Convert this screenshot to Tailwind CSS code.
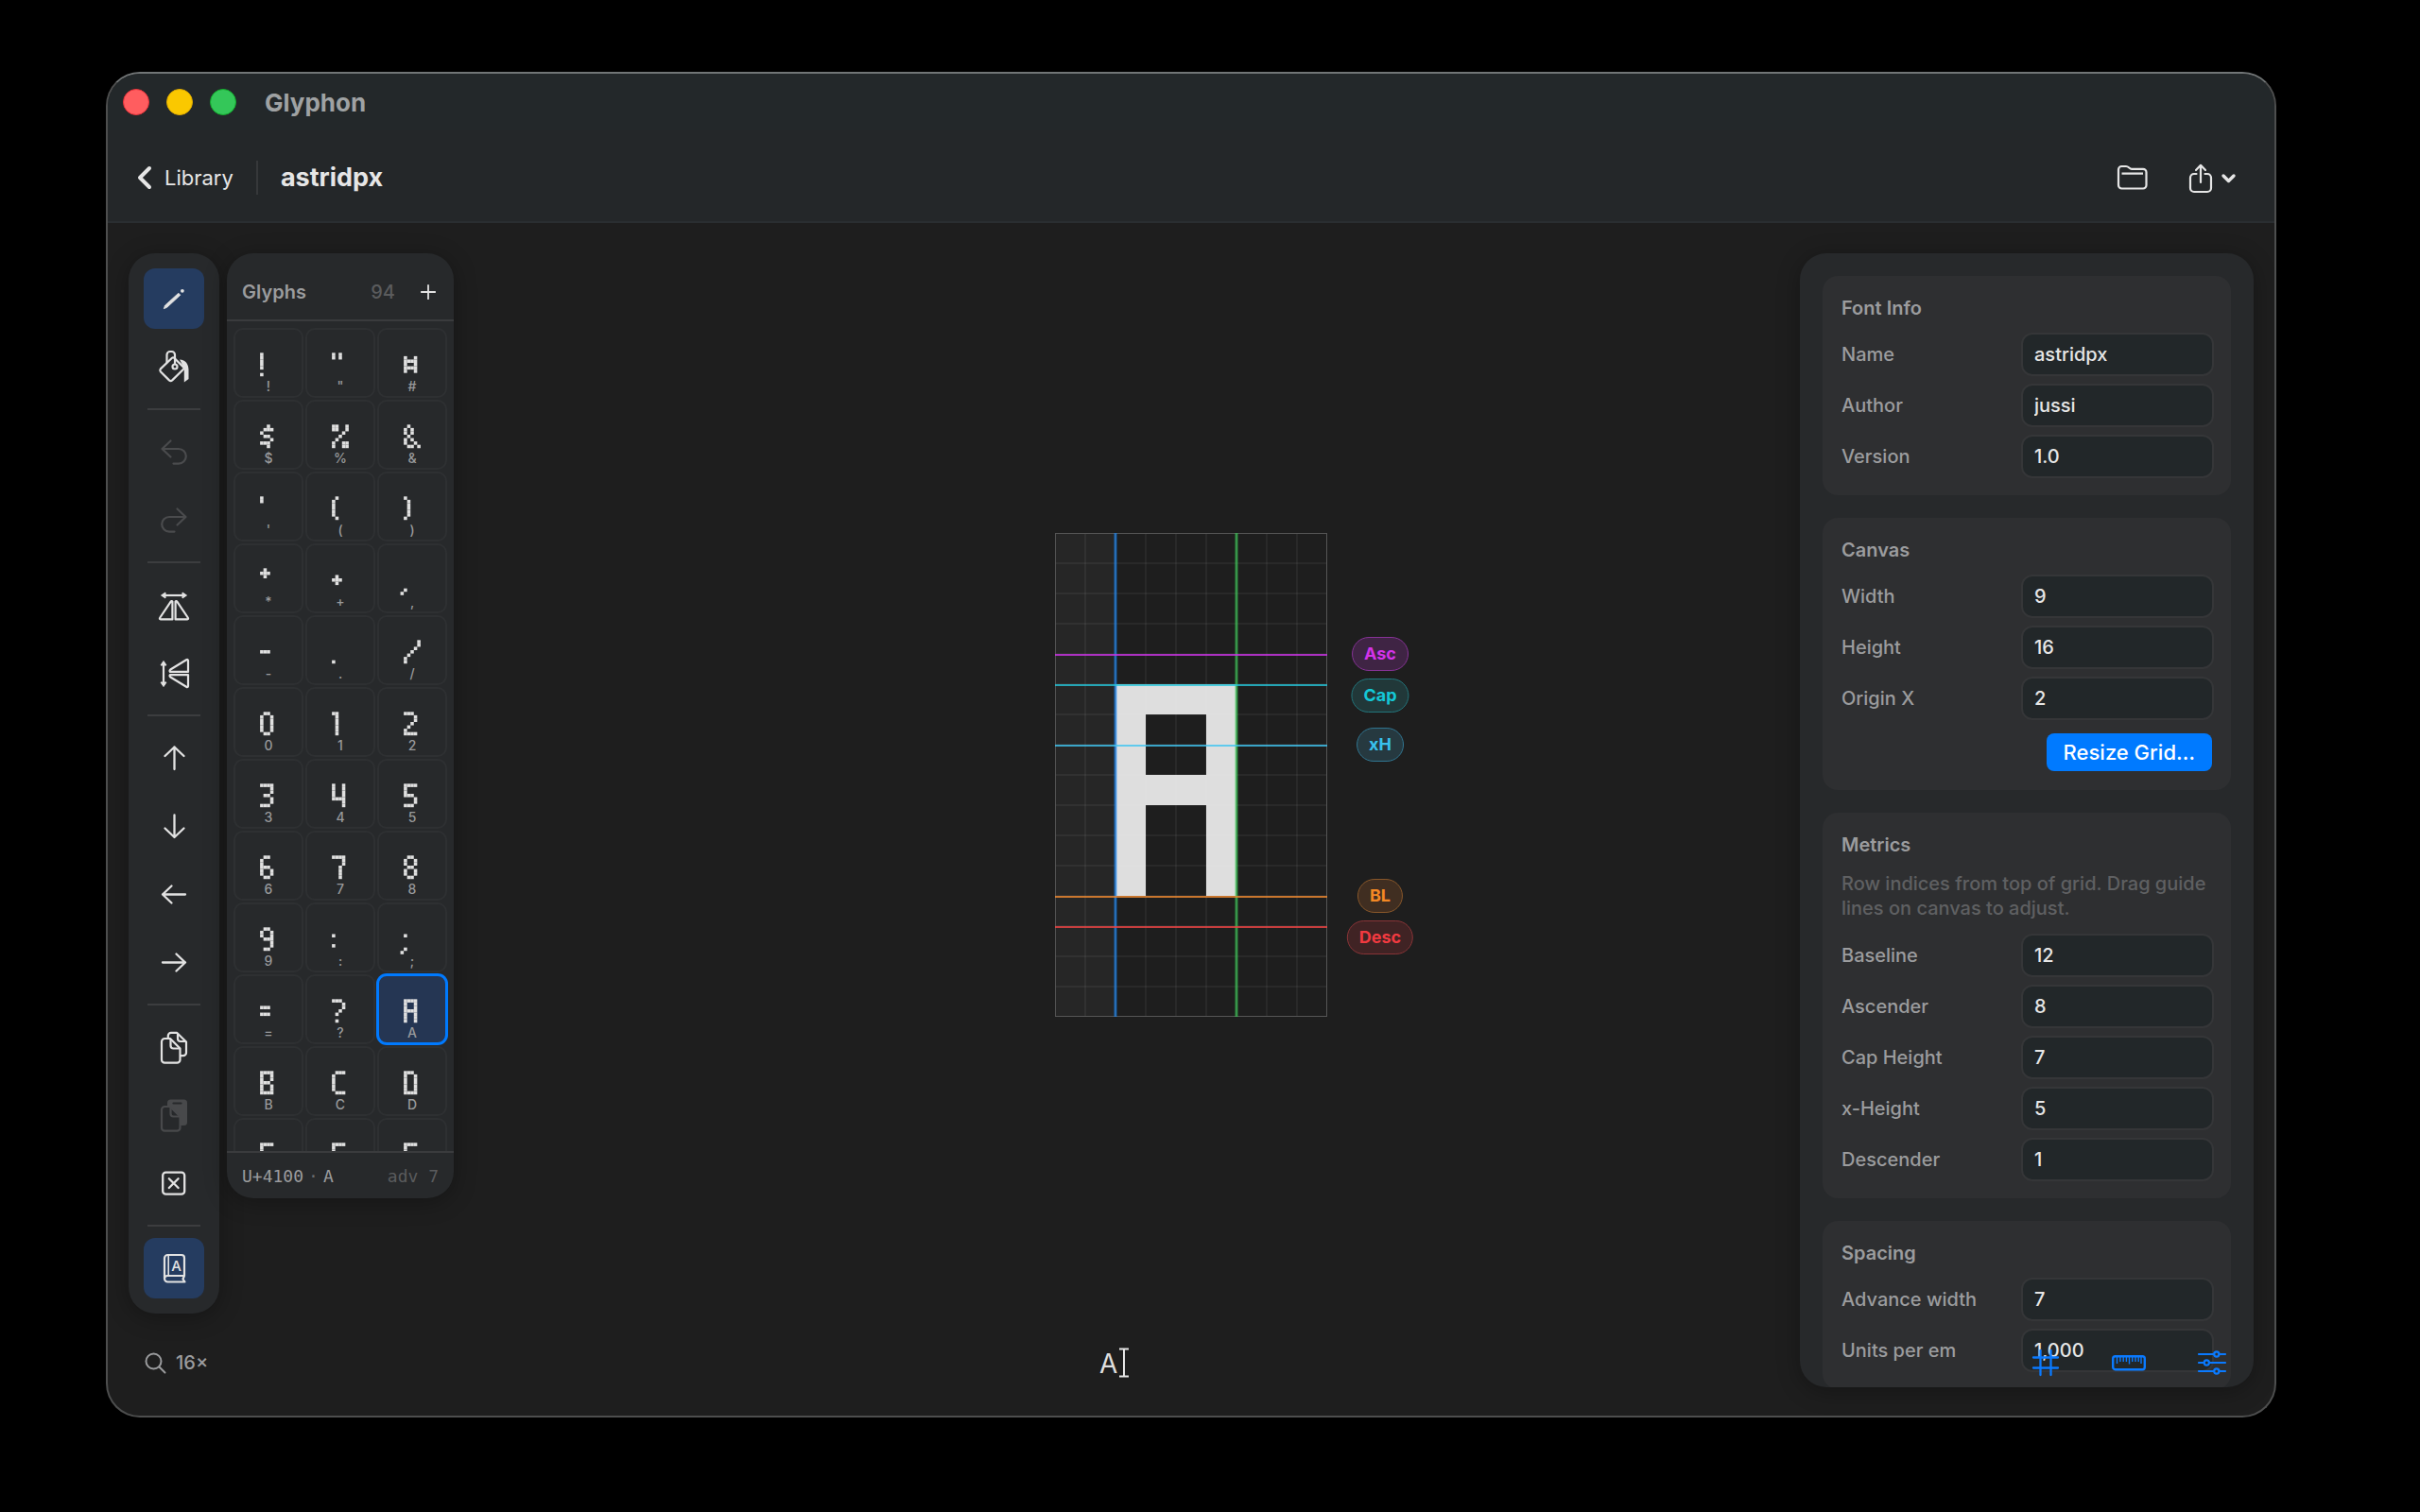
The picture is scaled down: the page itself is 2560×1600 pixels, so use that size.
<!DOCTYPE html>
<html lang="en">
<head>
  <meta charset="UTF-8" />
  <meta name="viewport" content="width=device-width, initial-scale=1.0"/>
  <title>Glyphon</title>
  <script src="https://cdn.jsdelivr.net/npm/@tailwindcss/browser@4"></script>
</head>
<body class="bg-black h-screen flex pt-[76px] pr-[152px] pb-[100px] pl-28 font-['Inter','Liberation_Sans',sans-serif] text-[20px] leading-6 text-[#9b9c9e]">

  <div class="flex-1 min-w-0 flex flex-col overflow-hidden rounded-[36px] border-2 border-[#4d4e4e] border-t-[#717576] bg-[#1e1e1e]">

    <!-- Title bar -->
    <header class="h-[60px] shrink-0 flex items-center gap-[18px] pl-4 bg-[#23282a]">
      <button aria-label="Close" class="size-7 rounded-full bg-[#ff5d5f] border border-[#e8323a]"></button>
      <button aria-label="Minimize" class="size-7 rounded-full bg-[#fac800] border border-[#e0ac00]"></button>
      <button aria-label="Zoom" class="size-7 rounded-full bg-[#34c759] border border-[#12ab2c]"></button>
      <h1 class="ml-3 pt-0.5 text-[26px] leading-8 font-bold text-[#9fa2a3]">Glyphon</h1>
    </header>

    <!-- Toolbar -->
    <div class="h-[98px] shrink-0 flex items-center pt-1 pl-7 pr-[38px] border-b-2 border-[#2a2e31] bg-[#242729] text-[#e6e6e6]">
      <a href="#" class="flex items-center gap-2 text-[22px]">
        <svg class="w-6 h-8" viewBox="0 0 24 32" fill="none" stroke="currentColor" stroke-width="4" stroke-linecap="round" stroke-linejoin="round"><path d="M16 6 6 16l10 10"/></svg>
        Library
      </a>
      <div class="w-0.5 h-9 mx-6 bg-[#36383a]"></div>
      <h2 class="text-[27px] leading-8 font-bold">astridpx</h2>
      <div class="ml-auto flex items-center gap-[38px]">
        <button aria-label="Open folder">
          <svg class="w-9 h-9" viewBox="0 0 36 36" fill="none" stroke="currentColor" stroke-width="2.200" stroke-linejoin="round"><path d="M3 26V9.500a3.500 3.500 0 0 1 3.500-3.500h4.500c3 0 3.500 2.800 6 2.800H29a3.500 3.500 0 0 1 3.500 3.500V26a3.500 3.500 0 0 1-3.500 3.500H6.500A3.500 3.500 0 0 1 3 26Z"/><path d="M6.500 13.700h22.500"/></svg>
        </button>
        <button aria-label="Share" class="flex items-center gap-1">
          <svg class="w-8 h-9" viewBox="0 0 32 36" fill="none" stroke="currentColor" stroke-width="2.200" stroke-linecap="round" stroke-linejoin="round"><path d="M11.500 14H9a4 4 0 0 0-4 4v11a4 4 0 0 0 4 4h14a4 4 0 0 0 4-4V18a4 4 0 0 0-4-4h-2.500"/><path d="M16 23V5M11 10l5-5.200 5 5.200"/></svg>
          <svg class="w-5 h-9" viewBox="0 0 20 36" fill="none" stroke="currentColor" stroke-width="3.400" stroke-linecap="round" stroke-linejoin="round"><path d="m4 16 5.500 5.500L15 16"/></svg>
        </button>
      </div>
    </div>

    <main class="flex-1 min-h-0 grid grid-cols-1 grid-rows-1">

      <!-- Drawing canvas -->
      <section class="col-start-1 row-start-1 flex items-center justify-center pb-[94px]">
        <div class="relative w-72 h-[512px]">
          <svg id="canvas" class="w-72 h-[512px] overflow-visible" viewBox="0 0 288 512">
            <rect width="288" height="512" fill="#1e1e1e"/>
            <rect width="64" height="512" fill="#262626"/>
            <g id="pixels" fill="#dedede"></g>
            <g id="gridLines" stroke="#ffffff" stroke-opacity="0.05" stroke-width="2"></g>
            <rect x="0.500" y="0.500" width="287" height="511" fill="none" stroke="#555555"/>
            <path d="M64 0V512" stroke="#0a84ff" stroke-opacity="0.3" stroke-width="4"/>
            <path d="M64 0V512" stroke="#2a7fd6" stroke-opacity="0.7" stroke-width="2"/>
            <path d="M192 0V512" stroke="#32d74b" stroke-opacity="0.3" stroke-width="4"/>
            <path d="M192 0V512" stroke="#3fae55" stroke-opacity="0.7" stroke-width="2"/>
            <path d="M0 129H288" stroke="#cc33e6" stroke-opacity="0.8" stroke-width="2"/>
            <path d="M0 161H288" stroke="#26c6da" stroke-opacity="0.8" stroke-width="2"/>
            <path d="M0 225H288" stroke="#40c4f0" stroke-opacity="0.8" stroke-width="2"/>
            <path d="M0 385H288" stroke="#f08a30" stroke-opacity="0.8" stroke-width="2"/>
            <path d="M0 417H288" stroke="#f04545" stroke-opacity="0.8" stroke-width="2"/>
          </svg>
          <!-- Guide labels -->
          <div class="absolute left-[344px] top-[128px] -translate-1/2 h-9 px-3 flex items-center rounded-full border border-[#863296] bg-[#3f2444] text-[18px] font-bold text-[#d433ea]">Asc</div>
          <div class="absolute left-[344px] top-[172px] -translate-1/2 h-9 px-3 flex items-center rounded-full border border-[#22757b] bg-[#213839] text-[18px] font-bold text-[#14c8d6]">Cap</div>
          <div class="absolute left-[344px] top-[224px] -translate-1/2 h-9 px-3 flex items-center rounded-full border border-[#307590] bg-[#263940] text-[18px] font-bold text-[#38c1ee]">xH</div>
          <div class="absolute left-[344px] top-[384px] -translate-1/2 h-9 px-3 flex items-center rounded-full border border-[#88572a] bg-[#402e21] text-[18px] font-bold text-[#f48824]">BL</div>
          <div class="absolute left-[344px] top-[428px] -translate-1/2 h-9 px-3 flex items-center rounded-full border border-[#883437] bg-[#402324] text-[18px] font-bold text-[#f23a40]">Desc</div>
        </div>
      </section>

      <!-- Floating panels -->
      <div class="col-start-1 row-start-1 min-h-0 flex items-start justify-between pt-8 px-[22px] pb-[30px]">
        <div class="flex items-start gap-2 max-h-full">

          <!-- Tools -->
          <nav class="w-24 p-4 flex flex-col items-center gap-2 rounded-[28px] bg-[#27292b] text-[#e2e2e2] shadow-[0_4px_24px_rgba(0,0,0,0.3)]">
            <button aria-label="Pencil" class="size-16 grid place-items-center rounded-xl bg-[#253c60]">
              <svg class="size-8" viewBox="0 0 32 32" fill="currentColor"><path d="M5.300 26.700 6.500 23.200 20.800 10.200l2 2L8.700 25.300Z" stroke="currentColor" stroke-width="0.800" stroke-linejoin="round"/><circle cx="24.900" cy="7.800" r="1.900"/></svg>
            </button>
            <button aria-label="Fill" class="size-16 grid place-items-center rounded-xl">
              <svg class="size-9" viewBox="0 0 36 36" fill="none" stroke="currentColor" stroke-width="2.200" stroke-linecap="round" stroke-linejoin="round"><path d="M18.200 8.800 28 18.400q1 1.200 0 2.300L16.200 32.400q-1.600 1.300-3.200 0L3.800 23.200q-1-1.500 0-2.800L16 8.800q1.100-1 2.200 0Z"/><path d="M10.500 13.500V5.500a3.500 3.500 0 0 1 3.500-3.500h1.500a3.500 3.500 0 0 1 3.500 3.500v10"/><circle cx="19" cy="18" r="2.500"/><path d="M24 10.500c6.500 0 9.500 5 9.500 11V31l-4.700 3.500V19.500Z" fill="currentColor" stroke="none"/></svg>
            </button>
            <div class="w-14 h-0.5 my-1 bg-[#3c3d3f]"></div>
            <button aria-label="Undo" class="size-16 grid place-items-center rounded-xl text-[#4a4b4d]">
              <svg class="size-8" viewBox="0 0 32 32" fill="none" stroke="currentColor" stroke-width="2.200" stroke-linecap="round" stroke-linejoin="round"><path d="M12.500 4.500 3.500 13l9 8.500M4 13h17a7.800 7.800 0 0 1 0 15.600h-5.500"/></svg>
            </button>
            <button aria-label="Redo" class="size-16 grid place-items-center rounded-xl text-[#4a4b4d]">
              <svg class="size-8" viewBox="0 0 32 32" fill="none" stroke="currentColor" stroke-width="2.200" stroke-linecap="round" stroke-linejoin="round"><path d="m19.500 4.500 9 8.500-9 8.500M28 13H11a7.800 7.800 0 0 0 0 15.600h5.500"/></svg>
            </button>
            <div class="w-14 h-0.5 my-1 bg-[#3c3d3f]"></div>
            <button aria-label="Flip horizontally" class="size-16 grid place-items-center rounded-xl">
              <svg class="size-9" viewBox="0 0 36 36" fill="none" stroke="currentColor" stroke-width="2.200" stroke-linejoin="round"><path d="M7 8h22"/><path d="M4.500 8 9 5v6ZM31.500 8 27 5v6Z" fill="currentColor" stroke-width="1"/><path d="M16.400 14.500V33.400H4q-1.700-.300-.700-1.900L14.500 14.800q1.300-1.300 1.900-.300ZM19.600 14.500V33.400H32q1.700-.300.700-1.900L21.500 14.800q-1.300-1.300-1.900-.300Z"/></svg>
            </button>
            <button aria-label="Flip vertically" class="size-16 grid place-items-center rounded-xl">
              <svg class="size-9" viewBox="0 0 36 36" fill="none" stroke="currentColor" stroke-width="2.200" stroke-linejoin="round"><path d="M7 8v22"/><path d="M7 5.500 4 10h6ZM7 32.500 4 28h6Z" fill="currentColor" stroke-width="1"/><path d="M14 16.900H33V5q-.300-1.700-1.900-.700L14.300 14.500q-1.300 1.300-.300 2.400ZM14 20.100H33V32q-.300 1.700-1.900.700L14.300 22.500q-1.300-1.300-.300-2.400Z"/></svg>
            </button>
            <div class="w-14 h-0.5 my-1 bg-[#3c3d3f]"></div>
            <button aria-label="Shift up" class="size-16 grid place-items-center rounded-xl">
              <svg class="size-8" viewBox="0 0 32 32" fill="none" stroke="currentColor" stroke-width="2.300" stroke-linecap="round" stroke-linejoin="round"><path d="M16.500 28V4.500M6.500 14l10-9.500 10 9.500"/></svg>
            </button>
            <button aria-label="Shift down" class="size-16 grid place-items-center rounded-xl">
              <svg class="size-8" viewBox="0 0 32 32" fill="none" stroke="currentColor" stroke-width="2.300" stroke-linecap="round" stroke-linejoin="round"><path d="M16.500 4.500V28M6.500 18.500l10 9.500 10-9.500"/></svg>
            </button>
            <button aria-label="Shift left" class="size-16 grid place-items-center rounded-xl">
              <svg class="size-8" viewBox="0 0 32 32" fill="none" stroke="currentColor" stroke-width="2.300" stroke-linecap="round" stroke-linejoin="round"><path d="M28 16.500H4M13.500 7.500 4 16.500l9.500 9"/></svg>
            </button>
            <button aria-label="Shift right" class="size-16 grid place-items-center rounded-xl">
              <svg class="size-8" viewBox="0 0 32 32" fill="none" stroke="currentColor" stroke-width="2.300" stroke-linecap="round" stroke-linejoin="round"><path d="M4 16.500h24M18.500 7.500l9.500 9-9.500 9"/></svg>
            </button>
            <div class="w-14 h-0.5 my-1 bg-[#3c3d3f]"></div>
            <button aria-label="Copy" class="size-16 grid place-items-center rounded-xl">
              <svg class="size-9" viewBox="0 0 36 36" fill="none" stroke="currentColor" stroke-width="2.200" stroke-linejoin="round"><path d="M11.800 9V6a3.200 3.200 0 0 1 3.200-3.200h6L31 12.500V24a3.200 3.200 0 0 1-3.200 3.200H25"/><path d="M22 3.500V9a3 3 0 0 0 3 3h5.500"/><path d="M5 12.200A3.200 3.200 0 0 1 8.200 9H14l10.500 10.500v12a3.200 3.200 0 0 1-3.200 3.200H8.200A3.200 3.200 0 0 1 5 31.500Z"/><path d="M14.500 10v6.500a3 3 0 0 0 3 3H24"/></svg>
            </button>
            <button aria-label="Paste" class="size-16 grid place-items-center rounded-xl text-[#48494b]">
              <svg class="size-9" viewBox="0 0 36 36" fill="none" stroke="currentColor" stroke-width="2.200" stroke-linejoin="round"><rect x="11" y="1.500" width="21" height="27.500" rx="3.500" fill="currentColor" stroke="none"/><path d="M17.500 5.500h8" stroke="#27292b" stroke-linecap="round"/><path d="M5 12.200A3.200 3.200 0 0 1 8.200 9H14l10.500 10.500v12a3.200 3.200 0 0 1-3.200 3.200H8.200A3.200 3.200 0 0 1 5 31.500Z" fill="#27292b"/><path d="M14.500 10v6.500a3 3 0 0 0 3 3H24"/></svg>
            </button>
            <button aria-label="Clear glyph" class="size-16 grid place-items-center rounded-xl">
              <svg class="size-8" viewBox="0 0 32 32" fill="none" stroke="currentColor" stroke-width="2.300" stroke-linecap="round"><rect x="4.200" y="4.600" width="23" height="23" rx="3.200"/><path d="m10.800 11.200 9.800 9.800M20.600 11.200l-9.800 9.800"/></svg>
            </button>
            <div class="w-14 h-0.5 my-1 bg-[#3c3d3f]"></div>
            <button aria-label="Glyph list" class="size-16 grid place-items-center rounded-xl bg-[#253c60]">
              <svg class="size-9" viewBox="0 0 36 36" fill="none" stroke="currentColor" stroke-width="2.200" stroke-linejoin="round"><path d="M29 26V7a3 3 0 0 0-3-3H11.500A3.500 3.500 0 0 0 8 7.500V29a3.500 3.500 0 0 0 3.500 3.500H29.500L27.500 29.500 29 26H11.500A3.300 3.300 0 0 0 8 29"/><path d="M12.200 4.500V26" stroke-width="1.600"/><text x="20.600" y="20.500" text-anchor="middle" font-size="15" font-weight="500" fill="currentColor" stroke="none">A</text></svg>
            </button>
          </nav>

          <!-- Glyph list -->
          <aside class="w-60 h-[1000px] max-h-full flex flex-col overflow-hidden rounded-[28px] bg-[#27292b] shadow-[0_4px_24px_rgba(0,0,0,0.3)]">
            <div class="h-[72px] shrink-0 flex items-center pt-3 pl-4 pr-[18px] border-b-2 border-[#3a3b3d]">
              <h3 class="font-semibold">Glyphs</h3>
              <span class="ml-auto font-medium text-[#5a5b5d]">94</span>
              <button aria-label="Add glyph" class="ml-[26px]">
                <svg class="w-[18px] h-[18px]" viewBox="0 0 18 18" fill="none" stroke="#e2e2e2" stroke-width="1.800" stroke-linecap="round"><path d="M9 1.800v14.400M1.800 9h14.400"/></svg>
              </button>
            </div>
            <div id="glyphList" class="flex-1 min-h-0 overflow-y-auto [scrollbar-width:none] grid grid-cols-3 auto-rows-[74px] gap-0.5 p-[7px]"></div>
            <div class="h-[50px] shrink-0 flex items-center gap-[5px] pt-0.5 px-4 border-t-2 border-[#3a3b3d] font-['DejaVu_Sans_Mono',monospace] text-[18px]">
              <span>U+4100</span>
              <span class="text-[#6b6c6e]">·</span>
              <span>A</span>
              <span class="ml-auto text-[#5a5b5d]">adv 7</span>
            </div>
          </aside>
        </div>

        <!-- Inspector -->
        <aside class="w-[480px] h-full flex flex-col gap-6 p-6 overflow-hidden rounded-[28px] bg-[#27292b] font-medium shadow-[0_4px_24px_rgba(0,0,0,0.3)]">
          <section class="shrink-0 pt-[22px] pr-[18px] pb-[18px] pl-5 rounded-2xl bg-[#2e2f31]">
            <h3 class="mb-[14px] font-semibold">Font Info</h3>
            <div class="flex flex-col gap-2">
              <label class="flex items-center justify-between">Name <input type="text" value="astridpx" class="w-[204px] h-[46px] px-3 rounded-xl border-2 border-[#353638] bg-[#222729] text-[#e6e6e6]"/></label>
              <label class="flex items-center justify-between">Author <input type="text" value="jussi" class="w-[204px] h-[46px] px-3 rounded-xl border-2 border-[#353638] bg-[#222729] text-[#e6e6e6]"/></label>
              <label class="flex items-center justify-between">Version <input type="text" value="1.0" class="w-[204px] h-[46px] px-3 rounded-xl border-2 border-[#353638] bg-[#222729] text-[#e6e6e6]"/></label>
            </div>
          </section>

          <section class="shrink-0 pt-[22px] pr-[18px] pb-5 pl-5 rounded-2xl bg-[#2e2f31]">
            <h3 class="mb-[14px] font-semibold">Canvas</h3>
            <div class="flex flex-col gap-2">
              <label class="flex items-center justify-between">Width <input type="text" value="9" class="w-[204px] h-[46px] px-3 rounded-xl border-2 border-[#353638] bg-[#222729] text-[#e6e6e6]"/></label>
              <label class="flex items-center justify-between">Height <input type="text" value="16" class="w-[204px] h-[46px] px-3 rounded-xl border-2 border-[#353638] bg-[#222729] text-[#e6e6e6]"/></label>
              <label class="flex items-center justify-between">Origin X <input type="text" value="2" class="w-[204px] h-[46px] px-3 rounded-xl border-2 border-[#353638] bg-[#222729] text-[#e6e6e6]"/></label>
            </div>
            <div class="mt-[14px] pr-0.5 flex justify-end">
              <button class="h-10 px-[18px] rounded-lg bg-[#007aff] text-[22px] font-medium text-white">Resize Grid…</button>
            </div>
          </section>

          <section class="shrink-0 pt-[22px] pr-[18px] pb-[18px] pl-5 rounded-2xl bg-[#2e2f31]">
            <h3 class="mb-4 font-semibold">Metrics</h3>
            <p class="mb-[14px] leading-[26px] text-[#5f6062]">Row indices from top of grid. Drag guide lines on canvas to adjust.</p>
            <div class="flex flex-col gap-2">
              <label class="flex items-center justify-between">Baseline <input type="text" value="12" class="w-[204px] h-[46px] px-3 rounded-xl border-2 border-[#353638] bg-[#222729] text-[#e6e6e6]"/></label>
              <label class="flex items-center justify-between">Ascender <input type="text" value="8" class="w-[204px] h-[46px] px-3 rounded-xl border-2 border-[#353638] bg-[#222729] text-[#e6e6e6]"/></label>
              <label class="flex items-center justify-between">Cap Height <input type="text" value="7" class="w-[204px] h-[46px] px-3 rounded-xl border-2 border-[#353638] bg-[#222729] text-[#e6e6e6]"/></label>
              <label class="flex items-center justify-between">x-Height <input type="text" value="5" class="w-[204px] h-[46px] px-3 rounded-xl border-2 border-[#353638] bg-[#222729] text-[#e6e6e6]"/></label>
              <label class="flex items-center justify-between">Descender <input type="text" value="1" class="w-[204px] h-[46px] px-3 rounded-xl border-2 border-[#353638] bg-[#222729] text-[#e6e6e6]"/></label>
            </div>
          </section>

          <section class="shrink-0 pt-[22px] pr-[18px] pb-[18px] pl-5 rounded-2xl bg-[#2e2f31]">
            <h3 class="mb-[14px] font-semibold">Spacing</h3>
            <div class="flex flex-col gap-2">
              <label class="flex items-center justify-between">Advance width <input type="text" value="7" class="w-[204px] h-[46px] px-3 rounded-xl border-2 border-[#353638] bg-[#222729] text-[#e6e6e6]"/></label>
              <label class="flex items-center justify-between">Units per em <input type="text" value="1,000" class="w-[204px] h-[46px] px-3 rounded-xl border-2 border-[#353638] bg-[#222729] text-[#e6e6e6]"/></label>
            </div>
          </section>
        </aside>
      </div>

      <!-- Bottom bar -->
      <footer class="col-start-1 row-start-1 self-end h-[94px] pb-[18px] pl-9 pr-[34px] grid grid-cols-[1fr_200px_1fr] items-center">
        <div class="flex items-center gap-2">
          <svg class="w-7 h-7" viewBox="0 0 28 28" fill="none" stroke="currentColor" stroke-width="2" stroke-linecap="round"><circle cx="12.500" cy="12.500" r="8"/><path d="m18.500 18.500 6 6"/></svg>
          <span class="font-medium">16×</span>
        </div>
        <div class="relative">
          <input type="text" aria-label="Preview text" value="A" class="w-full h-10 pt-0.5 pl-0.5 text-[28px] text-[#dedede]"/>
          <svg class="absolute left-[22px] top-1 w-3 h-8" viewBox="0 0 12 32" fill="none" stroke="#e6e6e6" stroke-width="2"><path d="M1 1.500h10M1 30.500h10M6 1.500v29"/></svg>
        </div>
        <div class="flex justify-end gap-6 text-[#0a7aff]">
          <button aria-label="Toggle grid" class="w-16 h-10 grid place-items-center">
            <svg class="size-8" viewBox="0 0 32 32" fill="none" stroke="currentColor" stroke-width="2.300" stroke-linecap="round"><path d="M10.500 3v26M21.500 3v26M3 10.500h26M3 21.500h26"/></svg>
          </button>
          <button aria-label="Toggle guides" class="w-16 h-10 grid place-items-center">
            <svg class="w-10 h-8" viewBox="0 0 40 32" fill="none" stroke="currentColor" stroke-width="2.400"><rect x="3.200" y="9.200" width="33.600" height="14" rx="2.500"/><path d="M7.500 10v7M10.900 10v5M14.200 10v5M17.400 10v5M20.500 10v7.500M23.700 10v5M27 10v5M30.200 10v5M33 10v7" stroke-width="1.400"/></svg>
          </button>
          <button aria-label="Toggle inspector" class="w-16 h-10 grid place-items-center">
            <svg class="size-8" viewBox="0 0 32 32" fill="none" stroke="currentColor" stroke-width="2.200" stroke-linecap="round"><path d="M2 7h15.500M24 7h6M2 16h5M13.500 16H30M2 25h15.500M24 25h6"/><circle cx="20.800" cy="7" r="2.600"/><circle cx="10.300" cy="16" r="2.600"/><circle cx="20.800" cy="25" r="2.600"/></svg>
          </button>
        </div>
      </footer>
    </main>
  </div>

  <script>
    // Glyph bitmaps: [character, first column, first row, rows]
    const glyphs = [
      ["!", 2, 5, ["#", "#", "#", "#", "#", ".", "#"]],
      ["\"", 2, 5, ["#.#", "#.#"]],
      ["#", 2, 6, ["#..#", "####", "#..#", "####", "#..#"]],
      ["$", 2, 5, ["..#.", ".###", "#...", ".##.", "...#", "###.", "..#."]],
      ["%", 2, 5, ["##..#", "##..#", "...#.", "..#..", ".#...", "#..##", "#..##"]],
      ["&", 2, 5, [".#...", "#.#..", "#.#..", ".#...", "#.#..", "#..#.", ".##.#"]],
      ["'", 2, 5, ["#", "#"]],
      ["(", 2, 5, [".#", "#.", "#.", "#.", "#.", "#.", ".#"]],
      [")", 2, 5, ["#.", ".#", ".#", ".#", ".#", ".#", "#."]],
      ["*", 2, 5, [".#.", "###", ".#."]],
      ["+", 2, 7, [".#.", "###", ".#."]],
      [",", 1, 11, [".#", "#."]],
      ["-", 2, 8, ["###"]],
      [".", 2, 11, ["#"]],
      ["/", 2, 5, ["....#", "....#", "...#.", "..#..", ".#...", "#....", "#...."]],
      ["0", 2, 5, [".##.", "#..#", "#..#", "#..#", "#..#", "#..#", ".##."]],
      ["1", 2, 5, ["##", ".#", ".#", ".#", ".#", ".#", ".#"]],
      ["2", 2, 5, ["###.", "...#", "...#", "..#.", ".#..", "#...", "####"]],
      ["3", 2, 5, ["####", "...#", "...#", ".##.", "...#", "...#", "###."]],
      ["4", 2, 5, ["#..#", "#..#", "#..#", "#..#", "####", "...#", "...#"]],
      ["5", 2, 5, ["####", "#...", "#...", "###.", "...#", "...#", "###."]],
      ["6", 2, 5, [".##.", "#...", "#...", "###.", "#..#", "#..#", ".##."]],
      ["7", 2, 5, ["####", "...#", "...#", "..#.", "..#.", "..#.", "..#."]],
      ["8", 2, 5, [".##.", "#..#", "#..#", ".##.", "#..#", "#..#", ".##."]],
      ["9", 2, 5, [".##.", "#..#", "#..#", ".###", "...#", "...#", ".##."]],
      [":", 2, 7, ["#", ".", ".", "#"]],
      [";", 1, 7, [".#", "..", "..", "..", ".#", "#."]],
      ["=", 2, 7, ["###", "...", "###"]],
      ["?", 2, 5, ["###.", "...#", "...#", "..#.", ".#..", "....", ".#.."]],
      ["A", 2, 5, ["####", "#..#", "#..#", "####", "#..#", "#..#", "#..#"]],
      ["B", 2, 5, ["####", "#..#", "#..#", "###.", "#..#", "#..#", "####"]],
      ["C", 2, 5, [".###", "#...", "#...", "#...", "#...", "#...", ".###"]],
      ["D", 2, 5, ["###.", "#..#", "#..#", "#..#", "#..#", "#..#", "####"]],
      ["E", 2, 5, ["####", "#...", "#...", "###.", "#...", "#...", "####"]],
      ["F", 2, 5, ["####", "#...", "#...", "###.", "#...", "#...", "#..."]],
      ["G", 2, 5, ["####", "#...", "#...", "#.##", "#..#", "#..#", "####"]],
    ];
    const selected = "A";

    function pixelRects([, col, row, rows], size) {
      let out = "";
      rows.forEach((line, y) => {
        [...line].forEach((px, x) => {
          if (px === "#") out += `<rect x="${(col + x) * size}" y="${(row + y) * size}" width="${size}" height="${size}"/>`;
        });
      });
      return out;
    }

    // Glyph list cells
    const glyphList = document.getElementById("glyphList");
    glyphs.forEach(glyph => {
      const cell = document.createElement("button");
      cell.className = glyph[0] === selected
        ? "flex flex-col items-center pt-[6px] rounded-[10px] border-2 border-[#007aff] ring-1 ring-[#007aff] bg-[#253653]"
        : "flex flex-col items-center pt-[6px] rounded-[10px] border-2 border-[#2e3032]";
      cell.innerHTML = `
        <svg class="w-8 h-[58px] shrink-0" viewBox="0 0 9 16" fill="#e0e0e0">${pixelRects(glyph, 1)}</svg>
        <span class="-mt-3 text-[14px] leading-4 font-medium text-[#98999b]"></span>
      `;
      cell.querySelector("span").textContent = glyph[0];
      glyphList.appendChild(cell);
    });

    // Canvas
    const current = glyphs.find(glyph => glyph[0] === selected);
    document.getElementById("pixels").innerHTML = pixelRects(current, 32);

    let lines = "";
    for (let x = 1; x < 9; x++) lines += `<path d="M${x * 32} 0V512"/>`;
    for (let y = 1; y < 16; y++) lines += `<path d="M0 ${y * 32}H288"/>`;
    document.getElementById("gridLines").innerHTML = lines;
  </script>
</body>
</html>
